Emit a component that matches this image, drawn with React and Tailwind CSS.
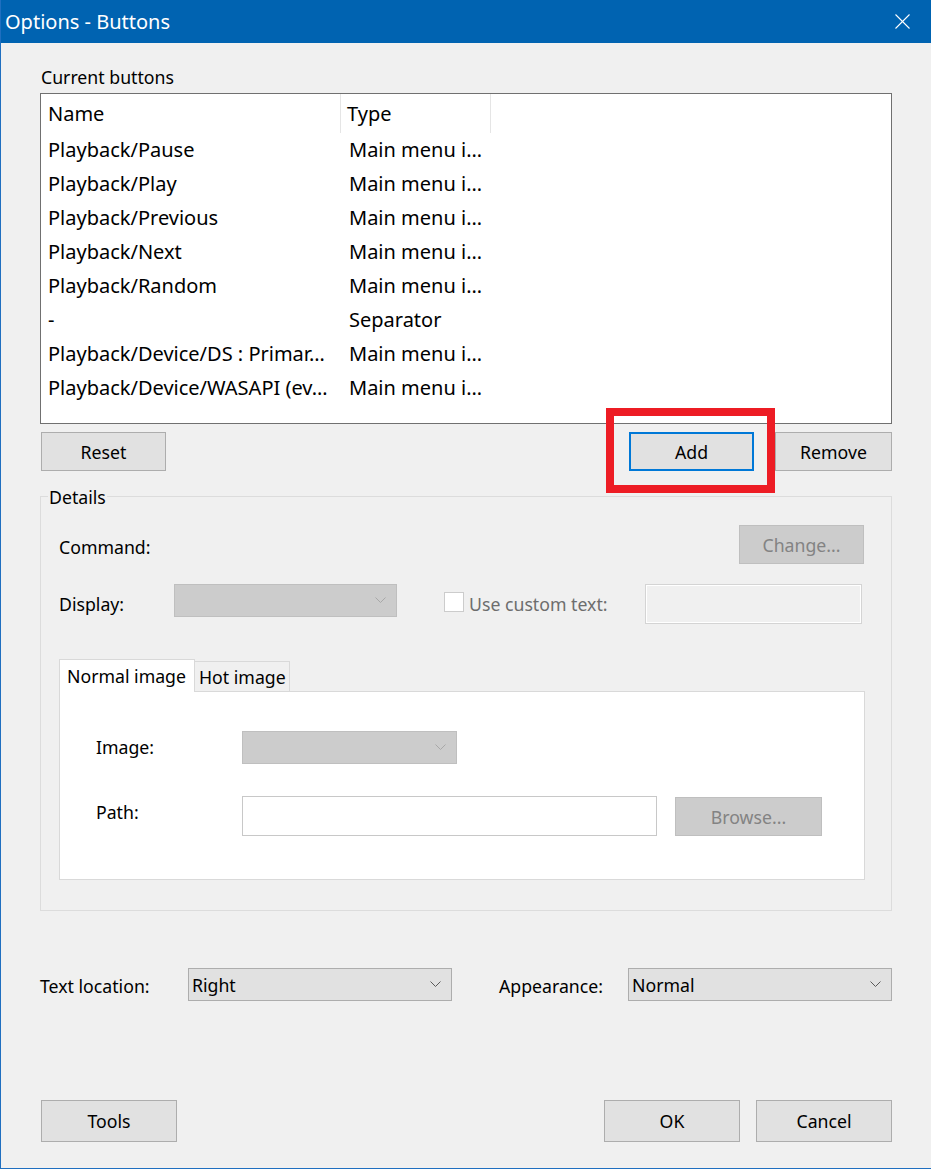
import React from "react";

const Chevron = ({ color }) => (
  <svg width="11" height="7" viewBox="0 0 11 7" fill="none">
    <polyline points="0.5,0.5 5.5,5.5 10.5,0.5" stroke={color} strokeWidth="1" />
  </svg>
);

const rows = [
  ["Playback/Pause", "Main menu i…"],
  ["Playback/Play", "Main menu i…"],
  ["Playback/Previous", "Main menu i…"],
  ["Playback/Next", "Main menu i…"],
  ["Playback/Random", "Main menu i…"],
  ["-", "Separator"],
  ["Playback/Device/DS : Primar…", "Main menu i…"],
  ["Playback/Device/WASAPI (ev…", "Main menu i…"],
];

export default function App() {
  return (
    <div className="w-[931px] h-[1169px] bg-[#F0F0F0] border-l border-b border-[#1F6FC0] flex flex-col font-['Noto_Sans',sans-serif] text-[17.7px] leading-[24px] text-black overflow-hidden">
      {/* Title bar */}
      <div className="h-[43px] shrink-0 bg-[#0063B1] flex items-center justify-between pl-[4px] pr-[21px] text-white text-[20px]">
        <span className="pt-[1px]">Options - Buttons</span>
        <svg width="15" height="15" viewBox="0 0 15 15" fill="none">
          <line x1="0.5" y1="0.5" x2="14.5" y2="14.5" stroke="#ffffff" strokeWidth="1.1" />
          <line x1="14.5" y1="0.5" x2="0.5" y2="14.5" stroke="#ffffff" strokeWidth="1.1" />
        </svg>
      </div>

      {/* Content */}
      <div className="flex flex-col px-[39px] pt-[22px]">
        <div className="h-[24px] pl-[1px]">Current buttons</div>

        {/* List */}
        <div className="mt-[4px] h-[331px] border border-[#707070] bg-white flex flex-col text-[20px] leading-[28px]">
          <div className="flex h-[39px] shrink-0">
            <div className="w-[300px] border-r border-[#E5E5E5] pl-[7px] flex items-center pt-[1px]">Name</div>
            <div className="w-[150px] border-r border-[#E5E5E5] pl-[6px] flex items-center pt-[1px]">Type</div>
          </div>
          {rows.map(([name, type], i) => (
            <div key={i} className="flex h-[34px] shrink-0 items-center">
              <div className="w-[300px] pl-[7px] whitespace-nowrap overflow-hidden">{name}</div>
              <div className="w-[150px] pl-[8px] whitespace-nowrap overflow-hidden">{type}</div>
            </div>
          ))}
        </div>

        {/* Buttons row */}
        <div className="relative mt-[8px] flex h-[39px]">
          <button className="ml-[1px] w-[125px] h-[39px] bg-[#E1E1E1] border border-[#ADADAD]">Reset</button>
          <button className="ml-auto w-[125px] h-[39px] bg-[#E1E1E1] border-2 border-[#0078D7]">Add</button>
          <button className="ml-[21px] w-[117px] h-[39px] bg-[#E1E1E1] border border-[#ADADAD]">Remove</button>
          <div className="absolute left-[566px] top-[-24px] w-[169px] h-[85px] border-[8px] border-[#ED1C24] pointer-events-none z-10" />
        </div>

        {/* Details group */}
        <div className="relative mt-[25px] border border-[#DCDCDC] pt-[28px] pb-[30px] flex flex-col">
          <span className="absolute left-[7px] top-[-12px] px-[1px] bg-[#F0F0F0]">Details</span>

          <div className="flex items-start justify-between pl-[18px] pr-[27px]">
            <span className="mt-[10px]">Command:</span>
            <button className="w-[125px] h-[39px] bg-[#CCCCCC] border border-[#BFBFBF] text-[#838383]">Change...</button>
          </div>

          <div className="mt-[20px] flex items-start pl-[18px] h-[40px]">
            <span className="w-[115px] mt-[8px]">Display:</span>
            <div className="w-[223px] h-[33px] bg-[#CCCCCC] border border-[#BFBFBF] flex items-center justify-end pr-[10px]">
              <Chevron color="#A8A8A8" />
            </div>
            <div className="ml-[47px] mt-[8px] w-[20px] h-[20px] border border-[#CCCCCC] bg-white" />
            <span className="ml-[5px] mt-[8px] text-[#6D6D6D]">Use custom text:</span>
            <div className="ml-auto mr-[29px] w-[217px] h-[40px] border border-[#D4D4D4] bg-[#F0F0F0] shadow-[inset_0_0_0_1px_#ffffff]" />
          </div>

          {/* Tabs */}
          <div className="mt-[35px] ml-[18px] mr-[26px] flex flex-col">
            <div className="flex items-end h-[32px]">
              <div className="relative z-10 -mb-[1px] h-[33px] w-[136px] border border-b-0 border-[#D9D9D9] bg-white pl-[7px] flex items-center">
                Normal image
              </div>
              <div className="h-[30px] w-[95px] border-t border-r border-[#D9D9D9] bg-[#F0F0F0] pl-[4px] flex items-center pt-[1px]">
                Hot image
              </div>
            </div>
            <div className="h-[189px] border border-[#D9D9D9] bg-white pl-[36px] pt-[39px] flex flex-col">
              <div className="flex items-start h-[33px]">
                <span className="w-[146px] mt-[4px]">Image:</span>
                <div className="w-[215px] h-[33px] bg-[#CCCCCC] border border-[#BFBFBF] flex items-center justify-end pr-[10px]">
                  <Chevron color="#A8A8A8" />
                </div>
              </div>
              <div className="mt-[32px] flex items-start h-[40px]">
                <span className="w-[146px] mt-[4px]">Path:</span>
                <div className="w-[415px] h-[40px] bg-white border border-[#C8C8C8]" />
                <button className="ml-[18px] mt-[1px] w-[147px] h-[39px] bg-[#CCCCCC] border border-[#BFBFBF] text-[#838383]">Browse...</button>
              </div>
            </div>
          </div>
        </div>

        {/* Text location / appearance */}
        <div className="mt-[57px] flex items-start h-[33px]">
          <span className="w-[148px] mt-[6px]">Text location:</span>
          <div className="w-[264px] h-[33px] bg-[#E1E1E1] border border-[#ADADAD] flex items-center justify-between pl-[3px] pr-[10px]">
            <span>Right</span>
            <Chevron color="#5A5A5A" />
          </div>
          <span className="ml-[47px] w-[129px] mt-[6px]">Appearance:</span>
          <div className="w-[264px] h-[33px] bg-[#E1E1E1] border border-[#ADADAD] flex items-center justify-between pl-[3px] pr-[10px]">
            <span>Normal</span>
            <Chevron color="#5A5A5A" />
          </div>
        </div>

        {/* Bottom buttons */}
        <div className="mt-[99px] flex h-[42px]">
          <button className="ml-[1px] w-[136px] h-[42px] bg-[#E1E1E1] border border-[#ADADAD]">Tools</button>
          <button className="ml-auto w-[136px] h-[42px] bg-[#E1E1E1] border border-[#ADADAD]">OK</button>
          <button className="ml-[16px] w-[136px] h-[42px] bg-[#E1E1E1] border border-[#ADADAD]">Cancel</button>
        </div>
      </div>
    </div>
  );
}
